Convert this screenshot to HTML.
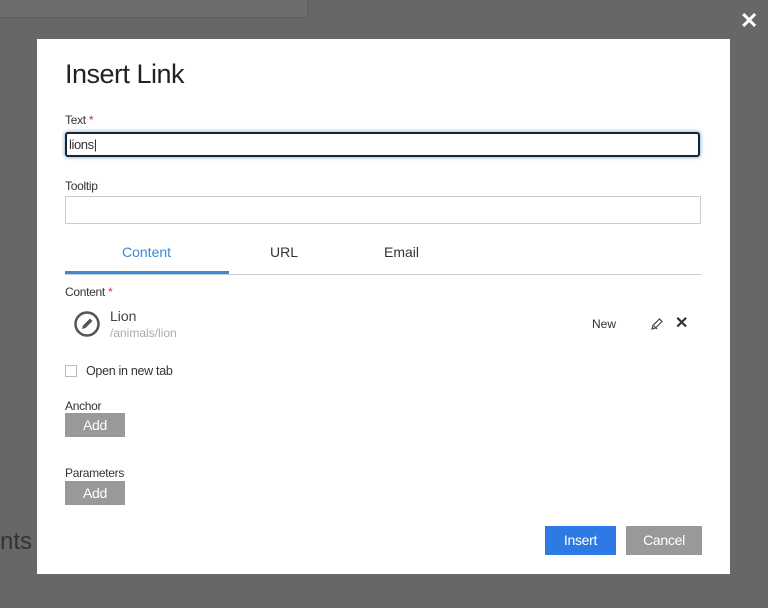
<!DOCTYPE html>
<html><head><style>
*{box-sizing:border-box;margin:0;padding:0}
body{width:768px;height:608px;background:#676767;font-family:"Liberation Sans",sans-serif;position:relative;overflow:hidden;color:#333}
.a{position:absolute}
.bgl{position:absolute;background:#6d6d6d}
.dlg{position:absolute;left:37px;top:39px;width:693px;height:535px;background:#fff}
.lbl{font-size:12px;color:#333;letter-spacing:-0.3px}
.btn{position:absolute;background:#999;color:#fff;font-size:14px;text-align:center;letter-spacing:-0.3px}
</style></head><body>
<div class="bgl" style="left:0;top:0;width:308px;height:18px;border-right:1px solid #5f5f5f;border-bottom:1px solid #5f5f5f"></div>
<div class="a" style="left:0;top:528px;font-size:24px;color:#333;">nts</div>
<div class="a" style="left:740px;top:8px;font-size:22px;color:#fff;font-weight:bold">✕</div>
<div class="dlg">
 <div class="a" style="left:28px;top:20px;font-size:27px;color:#222;letter-spacing:-0.5px">Insert Link</div>
 <div class="a lbl" style="left:28px;top:74px">Text <span style="color:#c33">*</span></div>
 <div class="a" style="left:28px;top:93px;width:635px;height:25px;border:2px solid #222;border-radius:3px;box-shadow:0 0 3px 1px #8fc3f0;font-size:13px;padding:3px 2px;letter-spacing:-0.4px">lions|</div>
 <div class="a lbl" style="left:28px;top:140px">Tooltip</div>
 <div class="a" style="left:28px;top:157px;width:636px;height:28px;border:1px solid #ccc"></div>
 <div class="a" style="left:85px;top:205px;font-size:14px;color:#3a8ad8">Content</div>
 <div class="a" style="left:233px;top:205px;font-size:14px;color:#333">URL</div>
 <div class="a" style="left:347px;top:205px;font-size:14px;color:#333">Email</div>
 <div class="a" style="left:28px;top:235px;width:636px;height:1px;background:#ccc"></div>
 <div class="a" style="left:28px;top:232px;width:164px;height:3px;background:#3a8ad8"></div>
 <div class="a lbl" style="left:28px;top:246px">Content <span style="color:#c33">*</span></div>
 <svg class="a" style="left:36px;top:271px" width="28" height="28" viewBox="0 0 28 28"><circle cx="14" cy="14" r="11.5" fill="none" stroke="#555" stroke-width="2.5"/><path d="M9 19 L10 15.5 L17 8.5 L19.5 11 L12.5 18 Z" fill="#555"/></svg>
 <div class="a" style="left:73px;top:269px;font-size:14px;color:#444">Lion</div>
 <div class="a" style="left:73px;top:287px;font-size:12px;color:#aaa">/animals/lion</div>
 <div class="a" style="left:555px;top:278px;font-size:12px;color:#333">New</div>
 <svg class="a" style="left:613px;top:278px" width="14" height="14" viewBox="0 0 14 14"><path d="M2 12 L3 8.5 L9.5 2 L12 4.5 L5.5 11 Z M4 9 L7 12" fill="none" stroke="#444" stroke-width="1.2"/></svg>
 <div class="a" style="left:638px;top:274px;font-size:16px;font-weight:bold;color:#333">✕</div>
 <div class="a" style="left:28px;top:326px;width:12px;height:12px;border:1px solid #bbb"></div>
 <div class="a lbl" style="left:49px;top:325px;font-size:12.5px">Open in new tab</div>
 <div class="a lbl" style="left:28px;top:360px">Anchor</div>
 <div class="btn" style="left:28px;top:374px;width:60px;height:24px;line-height:24px">Add</div>
 <div class="a lbl" style="left:28px;top:427px">Parameters</div>
 <div class="btn" style="left:28px;top:442px;width:60px;height:24px;line-height:24px">Add</div>
 <div class="btn" style="left:508px;top:487px;width:71px;height:29px;line-height:29px;background:#2d7ae4">Insert</div>
 <div class="btn" style="left:589px;top:487px;width:76px;height:29px;line-height:29px">Cancel</div>
</div>
</body></html>
